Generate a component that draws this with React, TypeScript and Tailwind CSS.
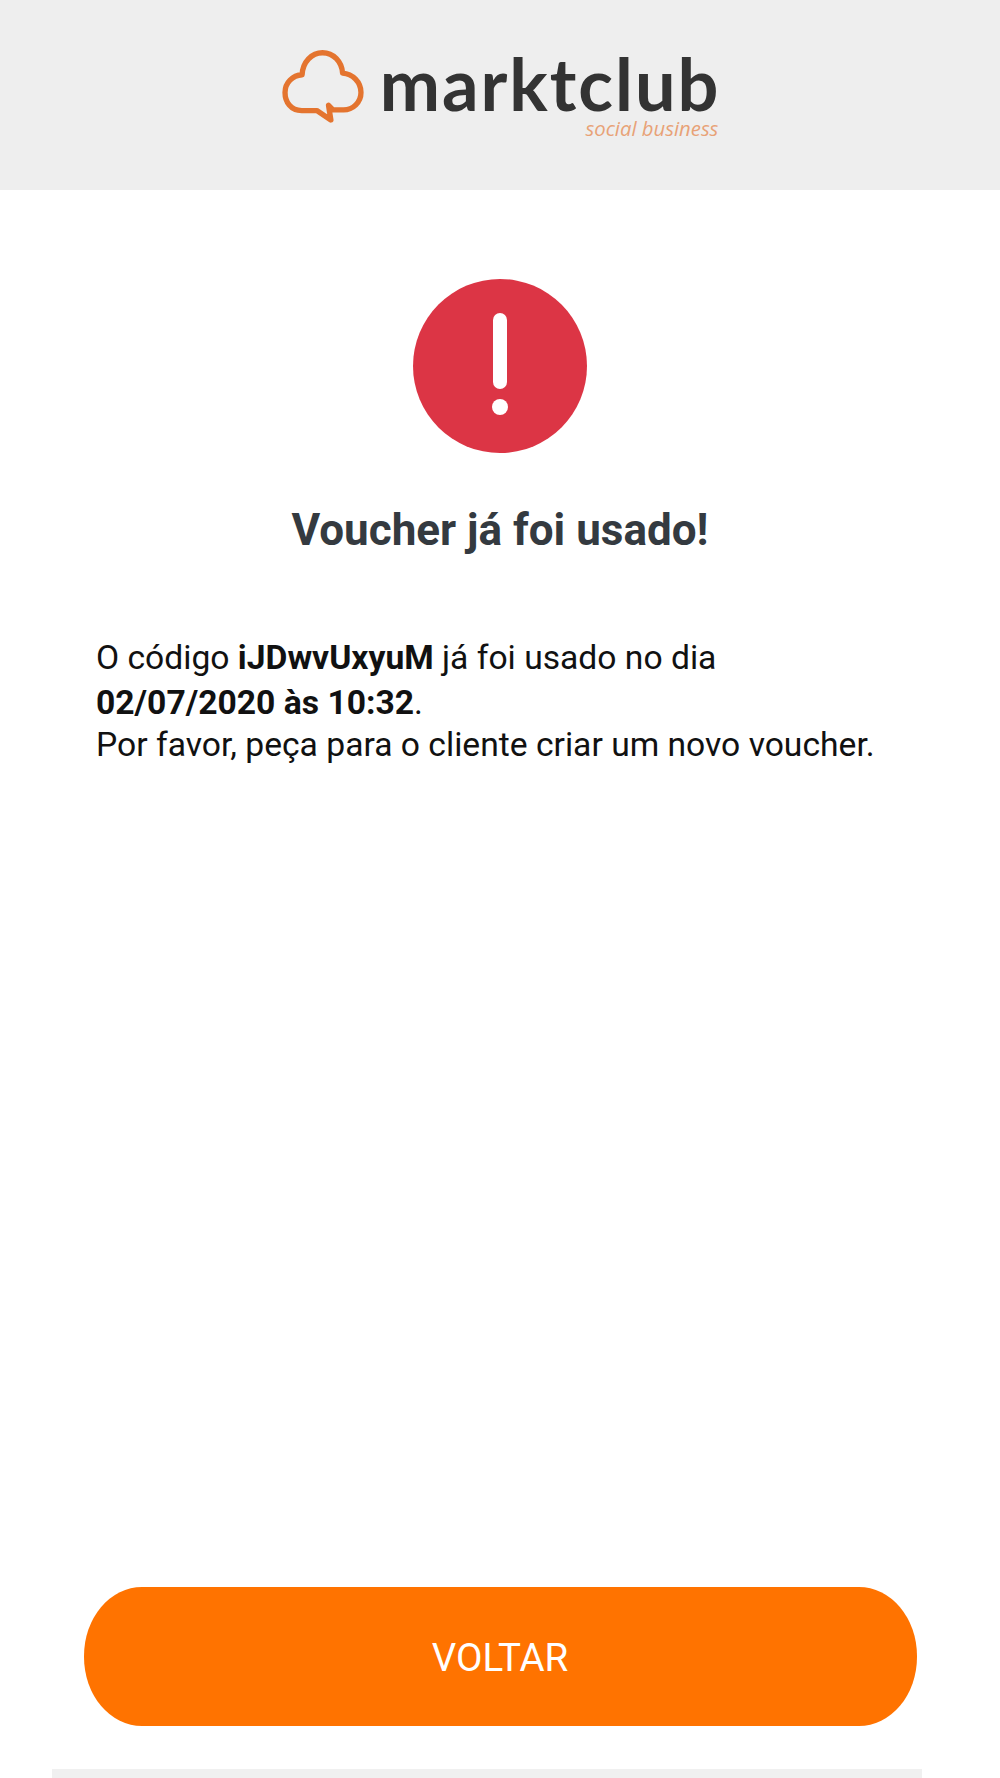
export default function App() {
  return (
    <div className="flex h-[1778px] w-full flex-col overflow-hidden bg-white font-['Roboto',sans-serif]">
      <header className="flex h-[190px] shrink-0 items-start justify-center bg-[#eeeeee] pt-[47px]">
        <svg
          aria-hidden="true"
          className="mr-[13px] h-[77px] w-[87px] shrink-0"
          fill="none"
          viewBox="60 50 260 230"
        >
          <path
            d="M125 240C92 240 75 214 75 186C75 156 98 135 126 133C128 94 155 67 187 67C220 67 245 94 247 128C277 130 302 155 302 186C302 215 278 238 250 238L218 238L205 224L212 268L170 240Z"
            stroke="#e4742f"
            strokeLinejoin="round"
            strokeWidth="16"
          />
        </svg>
        <div className="mt-[3px] flex flex-col items-end">
          <span className="h-[66px] font-['Lato',sans-serif] text-[72px] font-bold leading-[66px] tracking-[2px] text-[#333333]">
            marktclub
          </span>
          <span className="mr-[2px] mt-[2px] font-['Open_Sans',sans-serif] text-[20.3px] italic leading-[20px] text-[#e8a277]">
            social business
          </span>
        </div>
      </header>

      <main className="flex flex-1 flex-col px-[96px]">
        <div className="mt-[89px] flex size-[174px] shrink-0 flex-col items-center self-center rounded-full bg-[#dc3545] pt-[34px]">
          <div className="h-[76px] w-[14px] rounded-full bg-white" />
          <div className="mt-[10px] size-[16px] rounded-full bg-white" />
        </div>

        <h1 className="mt-[51px] text-center text-[44px] font-bold leading-[52px] text-[#343a40]">
          Voucher já foi usado!
        </h1>

        <p className="mt-[79px] text-[33.65px] leading-[45px] text-[#111111]">
          O código <strong className="font-bold">iJDwvUxyuM</strong> já foi usado no dia
          <br />
          <strong className="font-bold">02/07/2020 às 10:32</strong>.
        </p>
        <p className="-mt-[3px] text-[33.65px] leading-[45px] text-[#111111]">
          Por favor, peça para o cliente criar um novo voucher.
        </p>
      </main>

      <div className="flex shrink-0 flex-col items-center">
        <button
          className="flex h-[139px] w-[833px] items-center justify-center rounded-[58px/69px] bg-[#ff7300] pt-[2px] text-[38.5px] text-white"
          type="button"
        >
          VOLTAR
        </button>
        <div className="mt-[43px] ml-[52px] h-[9px] w-[870px] self-start bg-[#f0f0f0]" />
      </div>
    </div>
  );
}
